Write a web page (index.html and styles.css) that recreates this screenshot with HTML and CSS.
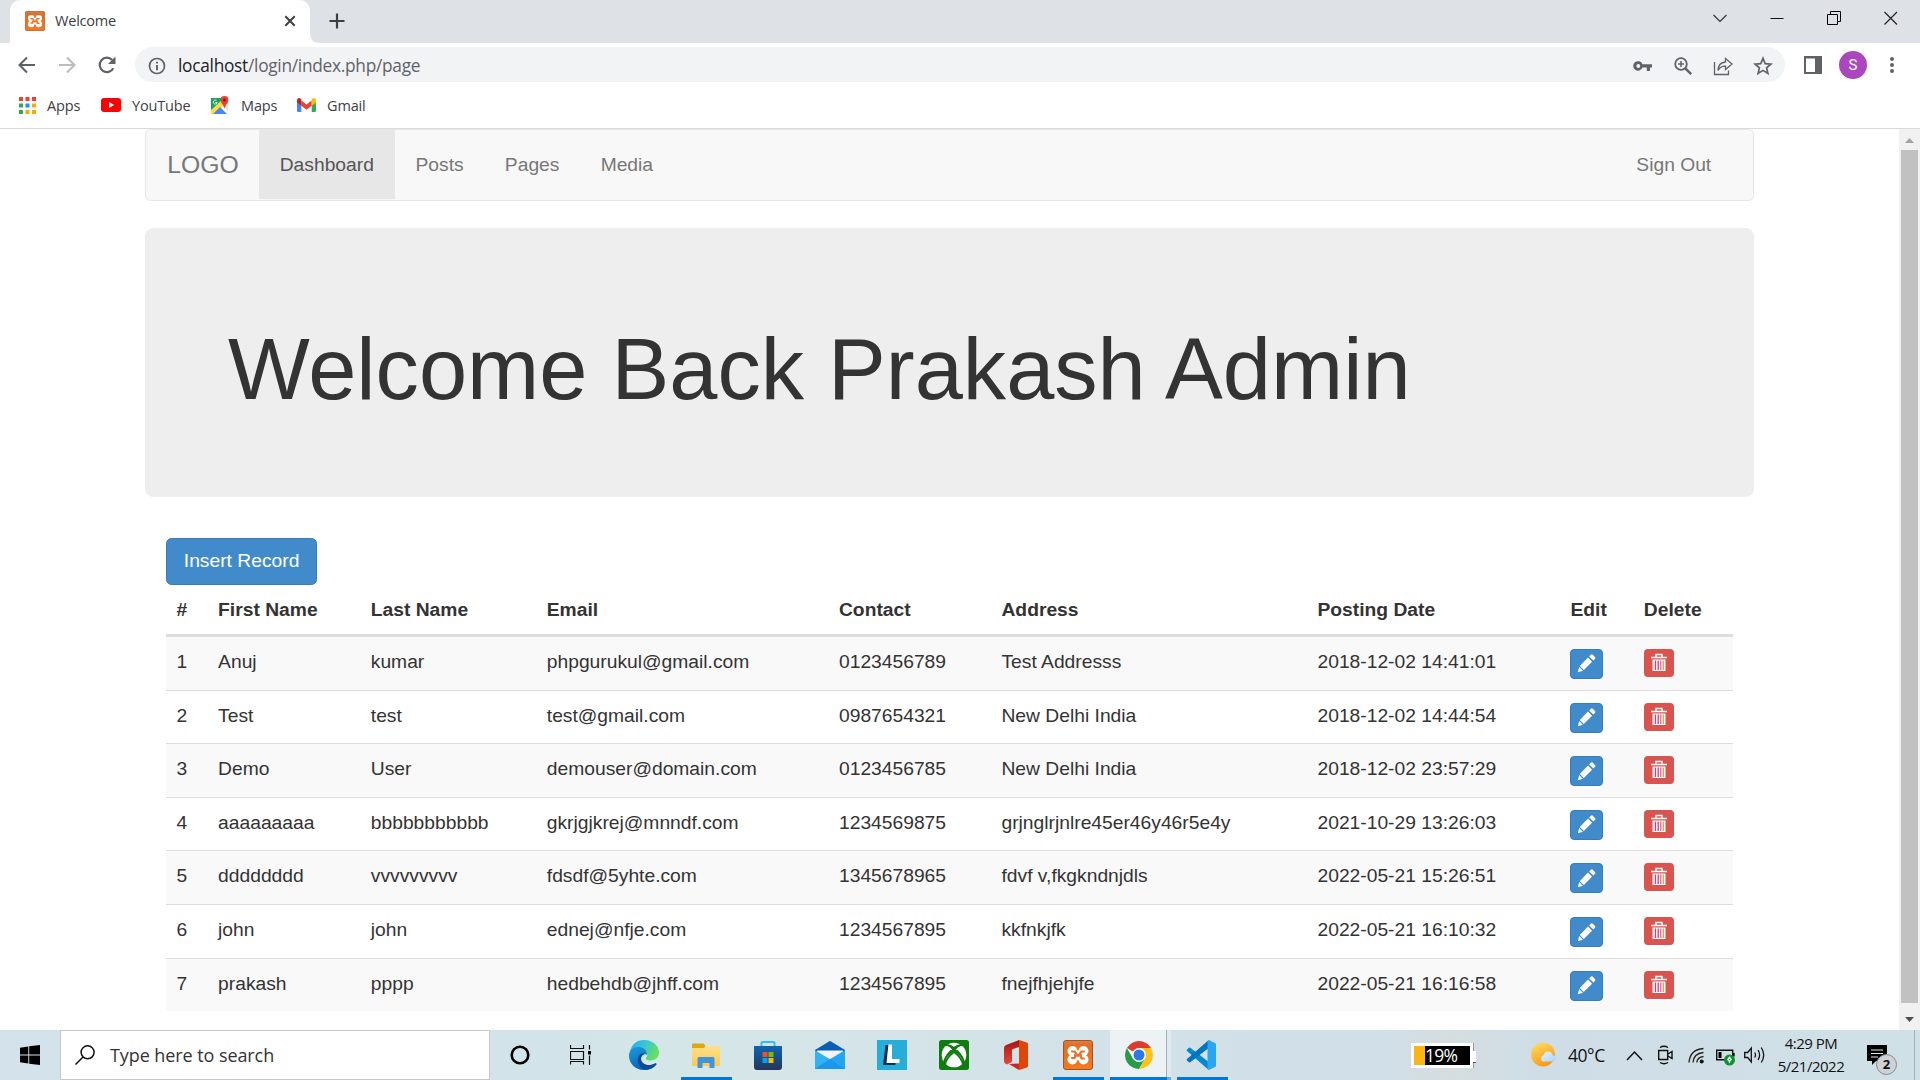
FILE: index.html
```html
<!DOCTYPE html>
<html lang="en">
<head>
<meta charset="utf-8">
<title>Welcome</title>
<link rel="stylesheet" href="styles.css">
</head>
<body>
<svg class="defs" aria-hidden="true">
  <defs>
    <linearGradient id="orange" x1="0" y1="0" x2="0" y2="1"><stop offset="0" stop-color="#d9824c"/><stop offset=".16" stop-color="#e56b1f"/><stop offset="1" stop-color="#f47b22"/></linearGradient>
    <linearGradient id="edgeTop" x1="0" y1="0" x2="1" y2=".4"><stop offset="0" stop-color="#27a8e8"/><stop offset=".5" stop-color="#37c4d8"/><stop offset="1" stop-color="#67df61"/></linearGradient>
    <linearGradient id="edgeLow" x1="0" y1="0" x2=".6" y2="1"><stop offset="0" stop-color="#1b9de2"/><stop offset="1" stop-color="#0b5cad"/></linearGradient>
    <linearGradient id="folder" x1="0" y1="0" x2="0" y2="1"><stop offset="0" stop-color="#ffe08a"/><stop offset="1" stop-color="#fdc94e"/></linearGradient>
    <linearGradient id="store" x1="0" y1="0" x2="0" y2="1"><stop offset="0" stop-color="#0d66b4"/><stop offset="1" stop-color="#24355a"/></linearGradient>
    <linearGradient id="office" x1="0" y1="0" x2="0" y2="1"><stop offset="0" stop-color="#a31515"/><stop offset="1" stop-color="#e8483a"/></linearGradient>
    <linearGradient id="sun" x1="0" y1="0" x2=".5" y2="1"><stop offset="0" stop-color="#ffe169"/><stop offset="1" stop-color="#fb9a16"/></linearGradient>
    <linearGradient id="cloud" x1="0" y1="0" x2="1" y2="1"><stop offset="0" stop-color="#e4f3fe"/><stop offset="1" stop-color="#a9d5fb"/></linearGradient>
    <symbol id="xampp" viewBox="0 0 30 30">
      <rect x=".5" y=".5" width="29" height="29" rx="2.500" fill="url(#orange)" stroke="#9c5524"/>
      <g fill="#fff"><circle cx="9.500" cy="11" r="5"/><circle cx="20.500" cy="11" r="5"/><circle cx="9.500" cy="19.500" r="5"/><circle cx="20.500" cy="19.500" r="5"/><path d="M8 10.500h14v9.500H8z"/></g>
      <g fill="none" stroke="#ec7326" stroke-linecap="round"><path d="M9 11.500h2.500l1.500 1.800-1.500 4.700H9M21 11.500h-2.500L17 13.500l1.500 5H21" stroke-width="2.200"/><path d="M12.500 15.300h5" stroke-width="3"/></g>
      <path d="M13.800 5h2.400v4.500h-2.400zM13.800 21h2.400v4.500h-2.400z" fill="#ec7326"/>
    </symbol>
    <symbol id="pencil" viewBox="0 0 19 19">
      <path d="M13.800.8q1-1 2 0l2.100 2.100q1 1 0 2L16.300 6.500 12.200 2.400zM11 3.600l4.100 4.100-8.300 8.300-4-4zM2.200 13l3.700 3.700L.8 18.200z" fill="#fff"/>
    </symbol>
    <symbol id="trash" viewBox="0 0 16 19">
      <path d="M5 4V1.500h6V4M0 4.500h16" fill="none" stroke="#fff" stroke-width="1.400"/>
      <path d="M1.500 6.500h13V18h-13z" fill="#fff"/>
      <path d="M4.500 7.500V17M7.200 7.500V17" stroke="#d43c78" stroke-width="1.300"/>
      <path d="M9.800 7.500V17" stroke="#c74ca0" stroke-width="1.100"/>
      <path d="M12.300 7.500V17" stroke="#f0a33c" stroke-width="1.400"/>
    </symbol>
  </defs>
</svg>

<div class="screen">
  <header class="tabstrip">
    <div class="tab">
      <svg class="favicon"><use href="#xampp"/></svg>
      <span class="tab-title">Welcome</span>
      <svg class="tab-close" viewBox="0 0 12 12"><path d="M1.300 1.300l9.400 9.400M10.700 1.300l-9.400 9.400" stroke="#3c4043" stroke-width="2"/></svg>
    </div>
    <svg class="tab-flare" viewBox="0 0 10 10"><path d="M0 0v10h10Q0 10 0 0z" fill="#fff"/></svg>
    <svg class="new-tab" viewBox="0 0 16 16"><path d="M8 .5v15M.5 8h15" stroke="#3c4043" stroke-width="2.200"/></svg>
    <div class="window-controls">
      <svg viewBox="0 0 14 14"><path d="M.5 4l6.500 6.500L13.500 4" fill="none" stroke="#333" stroke-width="1.200"/></svg>
      <svg viewBox="0 0 14 14"><path d="M.5 7.500h13" stroke="#111"/></svg>
      <svg viewBox="0 0 14 14"><path d="M.5 3.500h10v10H.5zM3.500 3.500v-3h10v10h-3" fill="none" stroke="#000"/></svg>
      <svg viewBox="0 0 14 14"><path d="M.5 1l12.500 12.500M13 1L.5 13.500" stroke="#222" stroke-width="1.200"/></svg>
    </div>
  </header>

  <div class="toolbar">
    <svg class="nav-icon" viewBox="0 0 20 20"><path d="M18 10H3M10 2.500L2.500 10l7.500 7.500" fill="none" stroke="#5f6368" stroke-width="2.100"/></svg>
    <svg class="nav-icon" viewBox="0 0 20 20"><path d="M2 10h15M10 2.500l7.500 7.500-7.500 7.500" fill="none" stroke="#babcbe" stroke-width="2.100"/></svg>
    <svg class="nav-icon" viewBox="0 0 20 20"><path d="M16.300 13.200A7.200 7.200 0 1 1 15.200 5" fill="none" stroke="#5f6368" stroke-width="2.200"/><path d="M18.500 1.500v7.500H11z" fill="#5f6368"/></svg>
    <div class="omnibox">
      <svg class="info" viewBox="0 0 18 18"><circle cx="9" cy="9" r="7.500" fill="none" stroke="#5f6368" stroke-width="1.700"/><path d="M9 8v5.200M9 4.700v1.900" stroke="#5f6368" stroke-width="1.900"/></svg>
      <span class="url"><b>localhost</b>/login/index.php/page</span>
      <div class="omni-actions">
        <svg viewBox="0 0 20 20"><path d="M9.500 8.300H19v3.300h-2V15h-3.200v-3.400H9.500a4.800 4.800 0 1 1 0-3.300z" fill="#5f6368"/><circle cx="5.300" cy="10" r="1.900" fill="#f1f3f4"/></svg>
        <svg viewBox="0 0 20 20"><circle cx="8" cy="8" r="5.800" fill="none" stroke="#5f6368" stroke-width="1.800"/><path d="M12.300 12.300l5.900 5.900" stroke="#5f6368" stroke-width="2.400"/><path d="M8 5v6M5 8h6" stroke="#5f6368" stroke-width="1.500"/></svg>
        <svg viewBox="0 0 20 20"><path d="M1.500 6v12.500h14v-4" fill="none" stroke="#5f6368" stroke-width="1.300"/><path d="M12.500 2.500l6.500 5.500-6.500 5.500v-3.300q-5-.2-7.500 4.300.3-8 7.500-8.500z" fill="none" stroke="#5f6368" stroke-width="1.300"/></svg>
        <svg viewBox="0 0 20 20"><path d="M10 2.300l2.200 5.300 5.700.5-4.300 3.700 1.300 5.600-4.900-3-4.900 3 1.300-5.600L2.100 8.100l5.700-.5z" fill="none" stroke="#5f6368" stroke-width="1.700"/></svg>
      </div>
    </div>
    <svg class="side-panel" viewBox="0 0 18 18"><path d="M0 0h18v18H0zM2 2.500v13.500h9V2.500z" fill="#5f6368" fill-rule="evenodd"/></svg>
    <span class="avatar">S</span>
    <svg class="more" viewBox="0 0 4 18"><g fill="#5f6368"><circle cx="2" cy="3" r="2"/><circle cx="2" cy="9" r="2"/><circle cx="2" cy="15" r="2"/></g></svg>
  </div>

  <nav class="bookmarks">
    <a class="bm-apps"><svg width="17" height="17" viewBox="0 0 17 17"><g fill="#ea4335"><path d="M0 0h4v4H0zM6.500 0h4v4h-4zM13 0h4v4h-4z"/></g><path d="M0 6.500h4v4H0zM0 13h4v4H0z" fill="#34a853"/><path d="M6.500 6.500h4v4h-4z" fill="#2a8cf4"/><path d="M13 6.500h4v4h-4zM6.500 13h4v4h-4zM13 13h4v4h-4z" fill="#fbaa05"/></svg><span>Apps</span></a>
    <a class="bm-youtube"><svg width="20" height="14" viewBox="0 0 20 14"><rect width="20" height="14" rx="3" fill="#f00"/><path d="M8 4l5.200 3L8 10z" fill="#fff"/></svg><span>YouTube</span></a>
    <a class="bm-maps"><svg width="20" height="20" viewBox="0 0 20 20"><path d="M1 3h12v6L1 17z" fill="#1fa15d"/><path d="M1 19v-4L12 5l4 4L4 19z" fill="#fedc43"/><path d="M3 19l7-7 7 7z" fill="#4a89f3"/><path d="M12 10l6 6v-6z" fill="#dfe3e6"/><path d="M14.500 1q4 0 4 4-.2 2.500-2.500 5l-1.500 3.500-1.500-3.500q-2.300-2.500-2.500-5 0-4 4-4z" fill="#e84234"/><circle cx="14.500" cy="5" r="1.500" fill="#821c15"/><path d="M6.500 5.500a2 2 0 1 0 .7 2H5.400" fill="none" stroke="#e5f5ec" stroke-width="1"/></svg><span>Maps</span></a>
    <a class="bm-gmail"><svg width="19" height="14" viewBox="0 0 19 14"><path d="M0 4l4.300 3v7H1.500Q0 14 0 12.500z" fill="#4285f4"/><path d="M19 4l-4.300 3v7h2.800q1.500 0 1.500-1.500z" fill="#34a853"/><path d="M4.300 2.500l5.200 4 5.200-4v5.200l-5.200 4-5.200-4z" fill="#ea4335"/><path d="M0 4.500V2Q.8-.8 3.500.5l.8.700v6.500z" fill="#c5221f"/><path d="M19 4.500V2q-.8-2.800-3.500-1.500l-.8.700v6.500z" fill="#fbbc04"/></svg><span>Gmail</span></a>
  </nav>

  <div class="viewport">
    <main class="page">
      <nav class="navbar">
        <a class="brand">LOGO</a>
        <a class="active">Dashboard</a>
        <a>Posts</a>
        <a>Pages</a>
        <a>Media</a>
        <a class="sign-out">Sign Out</a>
      </nav>
      <section class="jumbotron"><h1>Welcome Back Prakash Admin</h1></section>
      <section class="records">
        <a class="btn-insert">Insert Record</a>
        <table>
          <thead><tr><th>#</th><th>First Name</th><th>Last Name</th><th>Email</th><th>Contact</th><th>Address</th><th>Posting Date</th><th>Edit</th><th>Delete</th></tr></thead>
          <tbody>
            <tr><td>1</td><td>Anuj</td><td>kumar</td><td>phpgurukul@gmail.com</td><td>0123456789</td><td>Test Addresss</td><td>2018-12-02 14:41:01</td><td><a class="edit"><svg><use href="#pencil"/></svg></a></td><td><a class="delete"><svg><use href="#trash"/></svg></a></td></tr>
            <tr><td>2</td><td>Test</td><td>test</td><td>test@gmail.com</td><td>0987654321</td><td>New Delhi India</td><td>2018-12-02 14:44:54</td><td><a class="edit"><svg><use href="#pencil"/></svg></a></td><td><a class="delete"><svg><use href="#trash"/></svg></a></td></tr>
            <tr><td>3</td><td>Demo</td><td>User</td><td>demouser@domain.com</td><td>0123456785</td><td>New Delhi India</td><td>2018-12-02 23:57:29</td><td><a class="edit"><svg><use href="#pencil"/></svg></a></td><td><a class="delete"><svg><use href="#trash"/></svg></a></td></tr>
            <tr><td>4</td><td>aaaaaaaaa</td><td>bbbbbbbbbbb</td><td>gkrjgjkrej@mnndf.com</td><td>1234569875</td><td>grjnglrjnlre45er46y46r5e4y</td><td>2021-10-29 13:26:03</td><td><a class="edit"><svg><use href="#pencil"/></svg></a></td><td><a class="delete"><svg><use href="#trash"/></svg></a></td></tr>
            <tr><td>5</td><td>dddddddd</td><td>vvvvvvvvv</td><td>fdsdf@5yhte.com</td><td>1345678965</td><td>fdvf v,fkgkndnjdls</td><td>2022-05-21 15:26:51</td><td><a class="edit"><svg><use href="#pencil"/></svg></a></td><td><a class="delete"><svg><use href="#trash"/></svg></a></td></tr>
            <tr><td>6</td><td>john</td><td>john</td><td>ednej@nfje.com</td><td>1234567895</td><td>kkfnkjfk</td><td>2022-05-21 16:10:32</td><td><a class="edit"><svg><use href="#pencil"/></svg></a></td><td><a class="delete"><svg><use href="#trash"/></svg></a></td></tr>
            <tr><td>7</td><td>prakash</td><td>pppp</td><td>hedbehdb@jhff.com</td><td>1234567895</td><td>fnejfhjehjfe</td><td>2022-05-21 16:16:58</td><td><a class="edit"><svg><use href="#pencil"/></svg></a></td><td><a class="delete"><svg><use href="#trash"/></svg></a></td></tr>
          </tbody>
        </table>
      </section>
    </main>
    <div class="scrollbar">
      <svg viewBox="0 0 21 21"><path d="M6 14l4.500-5 4.500 5z" fill="#a3a3a3"/></svg>
      <div class="thumb"></div>
      <svg viewBox="0 0 21 21"><path d="M6 8l4.500 5 4.500-5z" fill="#505050"/></svg>
    </div>
  </div>

  <footer class="taskbar">
    <div class="start"><svg width="20" height="20" viewBox="0 0 20 20"><path d="M0 2.700L8.300 1.500v8H0zM9.200 1.300L20 0v9.500H9.200zM0 10.500h8.300v8L0 17.300zM9.200 10.500H20V20L9.200 18.700z"/></svg></div>
    <div class="search">
      <svg width="20" height="20" viewBox="0 0 20 20"><circle cx="12.600" cy="7.300" r="6.500" fill="none" stroke="#111" stroke-width="1.500"/><path d="M8 12L.5 19.500" stroke="#111" stroke-width="1.500"/></svg>
      <span>Type here to search</span>
    </div>
    <div class="slot cortana"><svg width="20" height="20" viewBox="0 0 20 20"><circle cx="10" cy="10" r="8.300" fill="none" stroke="#000" stroke-width="2.600"/></svg></div>
    <div class="slot taskview"><svg width="21" height="20" viewBox="0 0 21 20"><path d="M.5 0v3.500h13V0M.5 6.500h13v8H.5zM.5 19.500V16.500h13v3M19.500 0v4.500M19.500 10.500V20" fill="none" stroke="#111" stroke-width="1.200"/><path d="M18 6h3v3.500h-3z"/></svg></div>
    <div class="slot"><svg width="30" height="30" viewBox="0 0 30 30"><path d="M1 13C2 4 8 0 15 0c9 0 15 6 15 12.500 0 5-4 8-8.500 8-3.500 0-5.200-1.700-4.500-2.600 2.500-2.800 1.500-7-2.500-8.900C10 7 4 8.500 1 13z" fill="url(#edgeTop)"/><path d="M0 16C0 10 4 6.500 9.500 7c5.500.4 9 3.500 8.500 8-2-2-6 0-6 4 0 5 6 8.500 14 4.500 1-.4 1.500.5 1 1C24 28 20 30 15 30 6 30 0 23 0 16z" fill="url(#edgeLow)"/><path d="M12.500 13.500C7 17 7 27 17 29.700c4 .4 8-2 10.500-5.200.4-1-.4-1.400-1.400-1C19 27 12 24 12 18.500c0-2 1.500-4 3.300-4.500-.8-1-2-1-2.800-.5z" fill="#0c4a97"/></svg></div>
    <div class="slot open"><svg width="28" height="25" viewBox="0 0 28 25"><path d="M0 1.500Q0 .5 1 .5h10q1 0 1.500 1l1 2H27q1 0 1 1V20H0z" fill="#e3a50e"/><path d="M0 5h12l1.500-2H27q1 0 1 1v18q0 1-1 1H1q-1 0-1-1z" fill="url(#folder)"/><path d="M5.500 25V15.500q0-1.500 1.500-1.500h14q1.500 0 1.500 1.500V25h-5v-5h-7v5z" fill="#3f95dd"/></svg></div>
    <div class="slot"><svg width="30" height="30" viewBox="0 0 30 30"><path d="M8.500 7V3q0-1 1-1h11q1 0 1 1v4" fill="none" stroke="#35bdf2" stroke-width="2"/><path d="M1 6h28v21q0 3-3 3H4q-3 0-3-3z" fill="url(#store)"/><path d="M9.500 12h5v5h-5z" fill="#f25022"/><path d="M15.500 12h5v5h-5z" fill="#7fba00"/><path d="M9.500 18h5v5h-5z" fill="#00a4ef"/><path d="M15.500 18h5v5h-5z" fill="#ffb900"/></svg></div>
    <div class="slot"><svg width="30" height="28" viewBox="0 0 30 28"><path d="M0 9L14 .4q1-.6 2 0L30 9v5H0z" fill="#0b5fb3"/><path d="M2 9.500h26v8H2z" fill="#f3f3f3"/><path d="M0 9.200l15 9 15-9V28H0z" fill="#31b2f2"/><path d="M0 28l15-9.800L30 28z" fill="#1b8de3"/><path d="M0 28l15-9.800L30 9.200V28z" fill="#1e9cf0" opacity=".65"/></svg></div>
    <div class="slot"><svg width="30" height="30" viewBox="0 0 30 30"><path d="M0 0h30v30H0z" fill="#27add9"/><path d="M8.500 5h3L9.500 25H6z" fill="#0c2d52"/><path d="M6.500 23h12v2H6z" fill="#0c2d52"/><path d="M11.500 4.500H15v14.500h7.500V23H9.500z" fill="#fff"/></svg></div>
    <div class="slot"><svg width="30" height="30" viewBox="0 0 30 30"><rect width="30" height="30" rx="2.500" fill="#107c10"/><circle cx="15" cy="15" r="12.300" fill="#fff"/><path d="M6 5.500C9 4.200 12 5.800 15 8c3-2.200 6-3.800 9-2.500M17.800 10.300C22 14.500 25 19.500 25.300 24M12.200 10.300C8 14.500 5 19.500 4.700 24M6 24.800C7 19.500 11 15 15 12c4 3 8 7.500 9 12.800" fill="none" stroke="#107c10" stroke-width="1.800"/><path d="M5 5q4.500 0 8 4.500Q6 16 4.800 23.500 6 17 15 11.500 24 17 25.200 23.500 24 16 17 9.500 20.500 5 25 5q-4-2-10 2-6-4-10-2z" fill="#107c10"/></svg></div>
    <div class="slot"><svg width="24" height="30" viewBox="0 0 24 30"><path d="M15 0l8 2.500q1 .4 1 1.500v22q0 1.100-1 1.500L15 30z" fill="#e04707"/><path d="M15 0v7l-7 2.500V21q0 1-1 1.500l-4 2q-3-1-3-3V8q0-2 2-3z" fill="url(#office)"/><path d="M5 24l10-.5V30z" fill="#c52a23"/></svg></div>
    <div class="slot open"><svg width="30" height="30"><use href="#xampp"/></svg></div>
    <div class="slot open current"><svg width="28" height="28" viewBox="0 0 28 28"><circle cx="14" cy="14" r="14" fill="#fff"/><path d="M14 14L1.880 7A14 14 0 0 1 26.120 7z" fill="#dd3b30"/><path d="M1.880 7A14 14 0 0 0 14 28l6-10.500L14 21 8 17.500z" fill="#289b4a"/><path d="M14 7h12.120A14 14 0 0 1 14 28l6.100-10.500z" fill="#fbc21a"/><circle cx="14" cy="14" r="7" fill="#fff"/><circle cx="14" cy="14" r="5.500" fill="#2b78ea"/></svg></div>
    <div class="slot open code"><svg width="30" height="30" viewBox="0 0 30 30"><path d="M1 9.500l2-1.700q.7-.4 1.300 0L24 23v6.500q-1.500.3-3-1L1 11q-.7-.8 0-1.500z" fill="#0687cf"/><path d="M1 20.500l2 1.700q.7.400 1.300 0L24 7V.500q-1.500-.3-3 1L1 19q-.7.800 0 1.500z" fill="#0274b9"/><path d="M21.500.800L23 .2l6 2.800q1 .4 1 1.500v21q0 1.100-1 1.500l-6 2.800-1.500-.6z" fill="#2aa5f1"/></svg></div>

    <div class="tray">
      <div class="gauge"><i></i><span>19%</span></div>
      <svg class="weather" width="26" height="26" viewBox="0 0 26 26"><circle cx="12" cy="12.500" r="12" fill="url(#sun)"/><path d="M12.500 19.500a3.200 3.200 0 0 1 0-6.200q1-3.800 4.700-3.800t4.500 4a3 3 0 0 1 0 6z" fill="url(#cloud)"/></svg>
      <span class="temp">40°C</span>
      <svg class="chev" width="17" height="11" viewBox="0 0 17 11"><path d="M1 10l7.500-8L16 10" fill="none" stroke="#111" stroke-width="1.500"/></svg>
      <svg class="meet" width="16" height="20" viewBox="0 0 16 20"><path d="M.7 5.500h9v9h-9zM10 9l4-2.500v7L10 11M2 2.500q4-2.500 8 0M2 17.500q4 2.500 8 0" fill="none" stroke="#111" stroke-width="1.400"/></svg>
      <svg class="wifi" width="17" height="17" viewBox="0 0 17 17"><path d="M1 15.500Q2 2.500 15.500 1.500M5 15.500Q5.500 6.500 15.500 5.500M8.800 15.500q.5-5.300 6.700-6" fill="none" stroke="#222" stroke-width="1.300"/><circle cx="13.700" cy="14.500" r="2" fill="#111"/></svg>
      <svg class="power" width="20" height="17" viewBox="0 0 20 17"><path d="M.7 1.200h16v9.500H.7zM18 4v3.500" fill="none" stroke="#111" stroke-width="1.400"/><path d="M2.500 3h3v6h-3z"/><circle cx="13.500" cy="11" r="5.500" fill="#0d9430"/><path d="M13.500 14v-3M11.800 10.500l1.700-2.200 1.700 2.200-1.700 1.800z" fill="none" stroke="#fff" stroke-width="1.200"/></svg>
      <svg class="sound" width="22" height="18" viewBox="0 0 22 18"><path d="M.7 6.500h3L7.300 2v14L3.700 11.500h-3zM10.700 6.500q1.600 2.500 0 5M14 4q3.200 5 0 10M17.300 1.500q4.800 7.500 0 15" fill="none" stroke="#111" stroke-width="1.300"/></svg>
      <div class="clock"><span>4:29 PM</span><span>5/21/2022</span></div>
      <div class="notice">
        <svg width="20" height="20" viewBox="0 0 20 20"><path d="M0 0h20v16H9l-4 4v-4H0z"/><path d="M4 5h12M4 8.500h12M4 12h7" stroke="#dce8ee" stroke-width="1.200"/></svg>
        <b class="badge">2</b>
      </div>
      <i class="peek"></i>
    </div>
  </footer>
</div>
</body>
</html>
```
FILE: styles.css
```css
* { box-sizing: border-box; }
body { margin: 0; background: #fff; overflow: hidden; }
svg { display: block; flex: none; }
.defs { position: absolute; width: 0; height: 0; }

.screen {
  width: 1920px;
  height: 1080px;
  display: flex;
  flex-direction: column;
  overflow: hidden;
  font-family: "Open Sans", "Noto Sans", sans-serif;
}

/* browser chrome */
.tabstrip { flex: none; height: 43px; background: #dee1e6; display: flex; align-items: flex-end; padding-left: 10px; }
.tab {
  width: 300px; height: 43px; background: #fff; border-radius: 10px 10px 0 0;
  display: flex; align-items: center; padding: 0 15px 1px;
}
.favicon { width: 20px; height: 20px; }
.tab-title { margin-left: 10px; font-size: 14.500px; line-height: 20px; letter-spacing: -.2px; color: #3c4043; flex: 1; }
.tab-close { width: 12px; height: 12px; margin-right: -1px; }
.tab-flare { width: 10px; height: 10px; }
.new-tab { width: 16px; height: 16px; margin: 0 0 14px 9px; }
.window-controls { margin: 0 22px 18px auto; display: flex; gap: 43px; }
.window-controls svg { width: 14px; height: 14px; }

.toolbar { flex: none; height: 43px; display: flex; align-items: center; padding-left: 17px; }
.nav-icon { width: 20px; height: 20px; margin-right: 20px; }
.omnibox {
  width: 1650px; height: 35px; margin-left: -2px; border-radius: 18px; background: #f1f3f4;
  display: flex; align-items: center; padding: 2px 12px 0 13px;
}
.info { width: 18px; height: 18px; }
.url { margin-left: 12px; font-size: 17.300px; letter-spacing: -.27px; color: #5f6368; line-height: 24px; }
.url b { font-weight: 400; color: #202124; }
.omni-actions { display: flex; gap: 20px; margin-left: auto; }
.omni-actions svg { width: 20px; height: 20px; }
.side-panel { width: 18px; height: 18px; margin-left: 19px; }
.avatar {
  width: 28px; height: 28px; margin-left: 17px; border-radius: 50%; background: #ab47bc; color: #fff;
  font: 15px/28px Roboto, sans-serif; text-align: center;
}
.more { width: 4px; height: 18px; margin-left: 23px; }

.bookmarks { flex: none; height: 43px; border-bottom: 1px solid #d9dadc; display: flex; padding: 0 19px 4px; }
.bookmarks a { display: flex; align-items: center; gap: 11px; font-size: 14.500px; letter-spacing: -.15px; color: #3c4043; }
.bm-apps { width: 82px; }
.bm-youtube { width: 109px; }
.bm-maps { width: 87px; }

/* page viewport */
.viewport { flex: none; height: 901px; display: flex; overflow: hidden; }
.page {
  flex: 1; padding-left: 145px;
  font-family: "Liberation Sans", Arial, sans-serif;
  font-size: 19.250px; line-height: 27.500px; color: #333;
}
.navbar {
  width: 1609px; height: 71.500px; border: 1px solid #e7e7e7; border-radius: 5.500px; background: #f8f8f8;
  display: flex; margin-bottom: 27.500px; color: #777;
}
.navbar a { height: 69px; padding: 20.600px; line-height: 27.500px; }
.navbar .brand { font-size: 24.750px; padding: 20.600px 20px 0 21.200px; }
.navbar .active { background: #e7e7e7; color: #555; padding: 20.600px 21px; }
.navbar .sign-out { margin-left: auto; margin-right: 21.200px; }

.jumbotron { width: 1609px; height: 268.500px; background: #eee; border-radius: 8.250px; padding: 93.500px 83px 0; margin-bottom: 41.250px; }
.jumbotron h1 { margin: 0; font-size: 86.625px; line-height: 95.300px; font-weight: 500; white-space: nowrap; }

.records { padding-left: 20.600px; }
.btn-insert {
  display: block; width: 151px; height: 46.750px; border: 1px solid #357ebd; border-radius: 5.500px;
  background: #428bca; color: #fff; text-align: center; line-height: 44px; padding-left: 1px;
}
table { display: block; width: 1567.500px; }
thead, tbody { display: block; }
tr { display: grid; grid-template-columns: 41.500px 152.700px 176px 292.200px 162.500px 316px 253px 73.400px 1fr; }
th, td { padding: 11px 0 0 11px; text-align: left; white-space: nowrap; height: 52.600px; }
th { height: 52.250px; border-bottom: 3px solid #ddd; }
tbody tr { height: 53.625px; border-top: 1px solid #ddd; }
tbody tr:first-child { border-top: 0; height: 52.850px; }
tbody tr:nth-child(odd) { background: #f9f9f9; }
.edit, .delete { display: flex; align-items: center; justify-content: center; border-radius: 4px; margin-top: 1px; }
.edit { width: 33px; height: 30px; background: #428bca; border: 1px solid #357ebd; }
.edit svg { width: 19px; height: 19px; }
.delete { width: 30px; height: 28px; background: #d9534f; }
.delete svg { width: 16px; height: 19px; margin-top: -1px; }

.scrollbar { width: 21px; background: #f1f1f1; display: flex; flex-direction: column; }
.scrollbar svg { width: 21px; height: 21px; }
.thumb { height: 853px; margin: 0 2px 6px; background: #c1c1c1; }

/* taskbar */
.taskbar {
  flex: none; height: 50px; display: flex; align-items: stretch;
  background: linear-gradient(90deg, #d3e2eb 0, #d2e3ea 520px, #d5e6e8 660px, #d4e3e8 1000px, #d0dfe8 1380px, #d5dddf 1450px, #cfdee6 1530px, #d0e0e7 1920px);
}
.start { width: 60px; display: flex; align-items: center; justify-content: center; }
.search { width: 430px; background: #fff; border: 1px solid #c6c8ca; display: flex; align-items: center; padding-left: 14px; gap: 15px; }
.search span { font-size: 18px; letter-spacing: -.08px; color: #333; }
.slot { width: 62px; display: flex; align-items: center; justify-content: center; position: relative; }
.cortana { width: 60px; }
.taskview { width: 63px; padding-right: 3px; }
.open::after { content: ""; position: absolute; left: 6px; bottom: 0; width: 51px; height: 3px; background: #0078d7; }
.current { background: linear-gradient(90deg, transparent 1px, #edf2f5 1px, #edf2f5 57px, #9fb2bd 57px, #9fb2bd 58px, #dfe9ee 58px); padding-right: 2px; }
.current::after { left: 1px; width: 61px; background: linear-gradient(90deg, #0078d7 57px, #66ade7 57px); }
.code { padding-right: 2px; }
.tray { margin-left: auto; width: 509px; display: flex; align-items: center; color: #111; }
.gauge { width: 62px; height: 25px; background: #000; border: 3px solid #fff; box-shadow: 1px 0 #999; display: flex; align-items: center; color: #fff; position: relative; }
.gauge::after { content: ""; position: absolute; left: 59px; top: 5px; width: 3px; height: 11px; background: #fff; border-bottom: 1px solid #555; }
.gauge i { width: 11px; height: 19px; background: #fdb515; }
.gauge span { font-size: 17.500px; letter-spacing: -.7px; }
.weather { margin-left: 58px; }
.temp { margin-left: 11px; width: 38px; font-size: 17.500px; letter-spacing: -.45px; white-space: nowrap; }
.chev { margin-left: 20px; }
.meet { margin-left: 15px; }
.wifi { margin-left: 14px; }
.power { margin-left: 11px; margin-top: 5px; }
.sound { margin-left: 8px; }
.clock { margin-left: 9px; width: 72px; display: flex; flex-direction: column; align-items: center; font-size: 15px; line-height: 23px; letter-spacing: -.5px; white-space: nowrap; }
.notice { margin-left: 20px; position: relative; }
.badge {
  position: absolute; left: 9px; top: 9px; width: 21px; height: 21px; border-radius: 50%;
  border: 1px solid #888; background: #ccd2d6; font-size: 13px; line-height: 19px; text-align: center; color: #111;
}
.peek { margin-left: auto; margin-right: 5px; width: 1px; height: 50px; background: #9fb0b8; }
```
